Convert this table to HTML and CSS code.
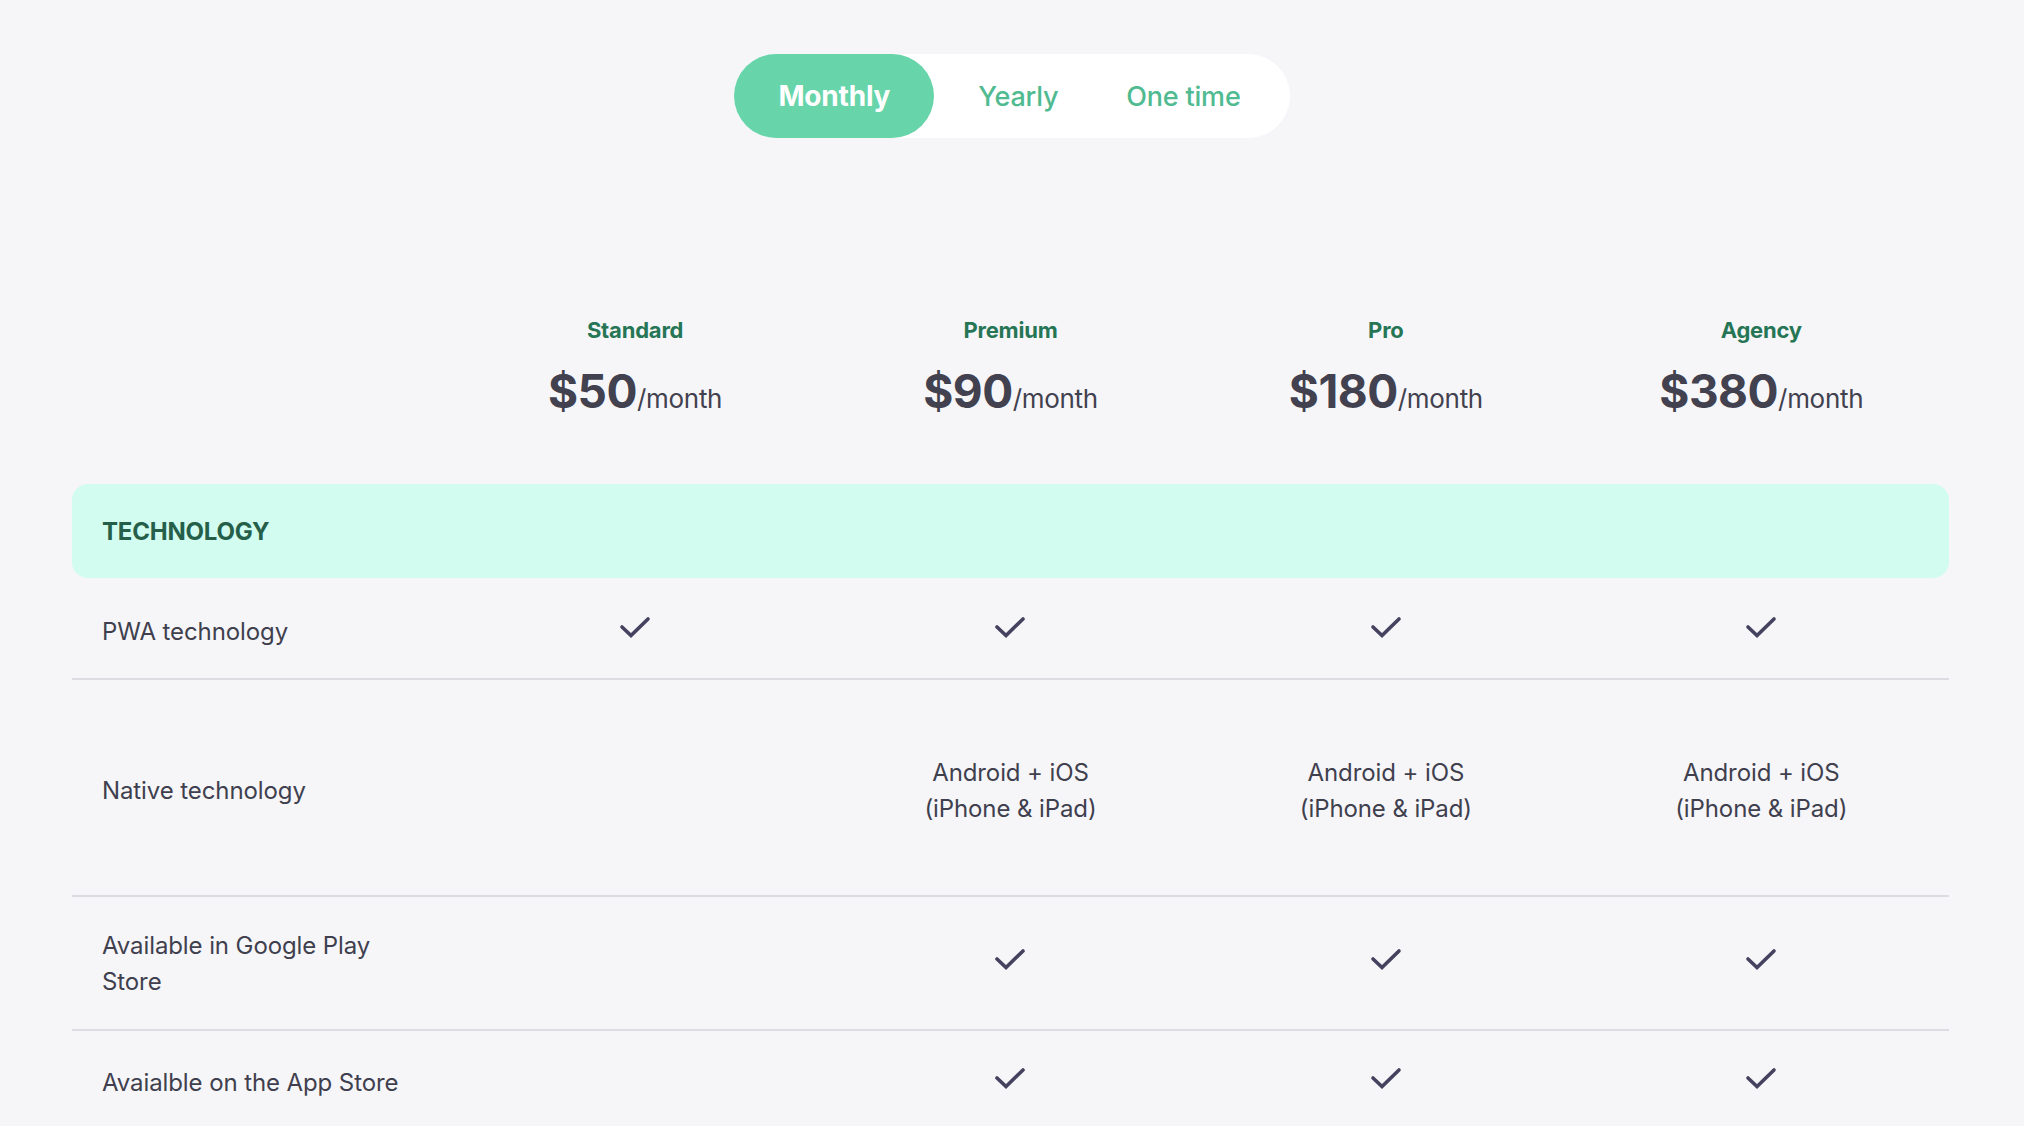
FILE: index.html
```html
<!DOCTYPE html>
<html lang="en">
<head>
<meta charset="utf-8">
<title>Pricing</title>
<link rel="stylesheet" href="styles.css">
</head>
<body>
<div class="page">
  <div class="toggle-wrap">
    <div class="toggle">
      <span class="opt active">Monthly</span>
      <span class="opt">Yearly</span>
      <span class="opt last">One time</span>
    </div>
  </div>

  <div class="table">
    <div class="row head">
      <div class="cell label"></div>
      <div class="cell plan"><div class="plan-name">Standard</div><div class="price"><span class="amount">$50</span><span class="per">/month</span></div></div>
      <div class="cell plan"><div class="plan-name">Premium</div><div class="price"><span class="amount">$90</span><span class="per">/month</span></div></div>
      <div class="cell plan"><div class="plan-name">Pro</div><div class="price"><span class="amount">$180</span><span class="per">/month</span></div></div>
      <div class="cell plan"><div class="plan-name">Agency</div><div class="price"><span class="amount">$380</span><span class="per">/month</span></div></div>
    </div>

    <div class="category">TECHNOLOGY</div>

    <div class="row feature r-pwa">
      <div class="cell label">PWA technology</div>
      <div class="cell val"><svg class="check" viewBox="0 0 32 24"><path d="M3 11 L12 19.5 L29 3"/></svg></div>
      <div class="cell val"><svg class="check" viewBox="0 0 32 24"><path d="M3 11 L12 19.5 L29 3"/></svg></div>
      <div class="cell val"><svg class="check" viewBox="0 0 32 24"><path d="M3 11 L12 19.5 L29 3"/></svg></div>
      <div class="cell val"><svg class="check" viewBox="0 0 32 24"><path d="M3 11 L12 19.5 L29 3"/></svg></div>
    </div>

    <div class="row feature r-native">
      <div class="cell label">Native technology</div>
      <div class="cell val"></div>
      <div class="cell val">Android + iOS<br>(iPhone &amp; iPad)</div>
      <div class="cell val">Android + iOS<br>(iPhone &amp; iPad)</div>
      <div class="cell val">Android + iOS<br>(iPhone &amp; iPad)</div>
    </div>

    <div class="row feature r-google">
      <div class="cell label">Available in Google Play Store</div>
      <div class="cell val"></div>
      <div class="cell val"><svg class="check" viewBox="0 0 32 24"><path d="M3 11 L12 19.5 L29 3"/></svg></div>
      <div class="cell val"><svg class="check" viewBox="0 0 32 24"><path d="M3 11 L12 19.5 L29 3"/></svg></div>
      <div class="cell val"><svg class="check" viewBox="0 0 32 24"><path d="M3 11 L12 19.5 L29 3"/></svg></div>
    </div>

    <div class="row feature r-app">
      <div class="cell label">Avaialble on the App Store</div>
      <div class="cell val"></div>
      <div class="cell val"><svg class="check" viewBox="0 0 32 24"><path d="M3 11 L12 19.5 L29 3"/></svg></div>
      <div class="cell val"><svg class="check" viewBox="0 0 32 24"><path d="M3 11 L12 19.5 L29 3"/></svg></div>
      <div class="cell val"><svg class="check" viewBox="0 0 32 24"><path d="M3 11 L12 19.5 L29 3"/></svg></div>
    </div>
  </div>
</div>
</body>
</html>
```

FILE: styles.css
```css
* { box-sizing: border-box; }

html, body {
  margin: 0;
  padding: 0;
  background: #f6f6f9;
  font-family: "Inter", "Liberation Sans", sans-serif;
  color: #403f4e;
}

.page {
  padding: 54px 75px 0 72px;
}

.toggle-wrap {
  display: flex;
  justify-content: center;
  padding-left: 3px;
}

.toggle {
  display: flex;
  align-items: center;
  height: 84px;
  background: #ffffff;
  border-radius: 42px;
  padding-right: 15px;
}

.opt {
  height: 84px;
  display: flex;
  align-items: center;
  padding: 0 34px;
  font-size: 27px;
  font-weight: 500;
  letter-spacing: -0.2px;
  color: #50ba91;
}

.opt.active {
  background: #67d4aa;
  color: #ffffff;
  font-weight: 700;
  font-size: 28px;
  padding: 0 44px;
  border-radius: 42px;
  margin-right: 10px;
}

.table {
  margin-top: 177px;
}

.row {
  display: grid;
  grid-template-columns: repeat(5, 1fr);
  align-items: center;
}

.head {
  margin-bottom: 52px;
}

.plan {
  display: flex;
  flex-direction: column;
  align-items: center;
}

.plan-name {
  font-size: 22px;
  line-height: 30px;
  font-weight: 700;
  color: #267656;
  letter-spacing: -0.2px;
}

.price {
  margin-top: 16px;
  line-height: 60px;
  white-space: nowrap;
}

.amount {
  font-size: 46px;
  font-weight: 700;
  color: #42414f;
  letter-spacing: -0.5px;
}

.per {
  font-size: 26px;
  font-weight: 400;
  color: #42414f;
  letter-spacing: -0.3px;
}

.category {
  height: 94px;
  background: #d2fcf0;
  border-radius: 16px;
  display: flex;
  align-items: center;
  padding-left: 30px;
  font-size: 24px;
  font-weight: 700;
  color: #255f4a;
  letter-spacing: -0.2px;
}

.feature {
  font-size: 24px;
  line-height: 36px;
  letter-spacing: -0.1px;
  border-bottom: 2px solid #dcdce2;
}

.feature .label {
  padding: 0 40px 0 30px;
}

.feature .val {
  text-align: center;
  display: flex;
  justify-content: center;
  align-items: center;
}

.check {
  width: 32px;
  height: 24px;
  margin-top: -8px;
}

.check path {
  fill: none;
  stroke: #44425e;
  stroke-width: 3.6;
  stroke-linecap: round;
  stroke-linejoin: miter;
}

.r-pwa { min-height: 102px; padding: 34px 0 26px; }
.r-native { min-height: 217px; padding: 33px 0 27px; }
.r-google { min-height: 133px; padding: 31px 0 29px; }
.r-app { padding: 34px 0; border-bottom: none; }
```
